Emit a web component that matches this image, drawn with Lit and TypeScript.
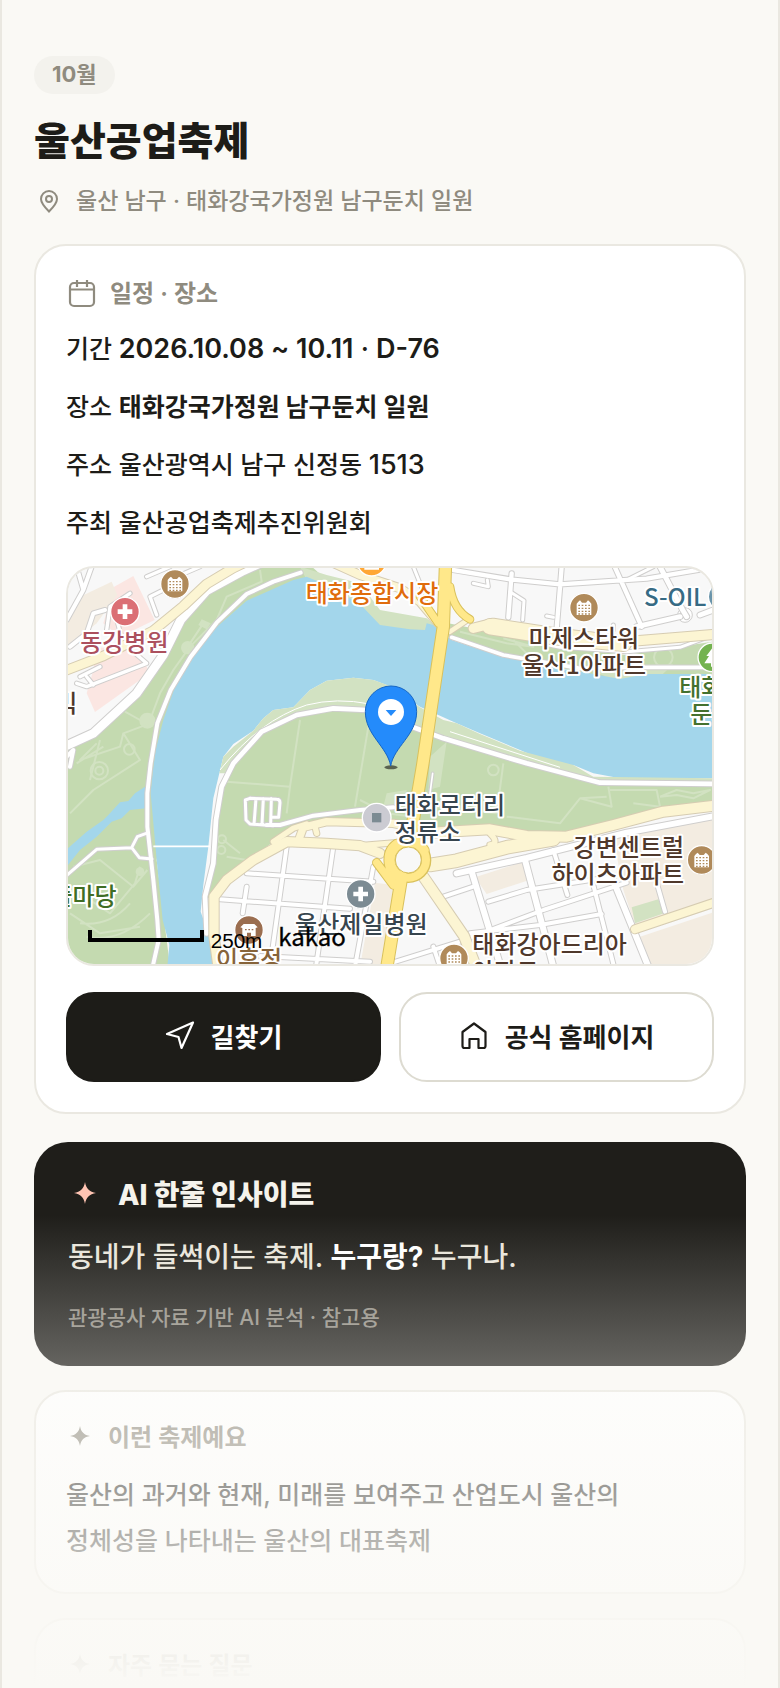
import { LitElement, html, css, svg } from "lit";
import { customElement } from "lit/decorators.js";

type Road = [width: number, d: string];

interface Label {
  x: number;
  y: number;
  lines: string[];
  color: string;
  anchor?: "start" | "middle" | "end";
}

const STREETS: Road[] = [
  [26, "M0 566L100 520L230 400L310 285L362 180L440 92L550 32L600 10"],
  [12, "M722 38L640 65L560 102L470 188L392 290L332 390L292 490L272 610L262 700L262 800L280 960L292 1080L296 1140L278 1220"],
  [14, "M440 1120L435 1010L460 910L468 780L485 680L520 610L605 515L710 465L820 445L920 450L1050 498L1150 535L1400 610L1620 668L1980 672"],
  [9, "M10 955L110 868L215 863L232 830L265 818M215 863L238 893L276 897"],
  [12, "M620 795L660 795L760 767L900 750L1000 742"],
  [9, "M570 715L650 718Q660 718 660 728L656 772L634 772M570 715L556 720L558 780L570 792L640 797M588 716L582 793M610 716L606 793M634 716L632 793"],
  [18, "M1190 940L1400 894L1700 818L1980 765"],
  [5, "M1118 640L1106 730"],
  [12, "M50 20L70 90L20 180M70 90L95 20M30 260L80 220L100 160L135 150"],
  [10, "M50 370L80 380L260 310L225 280M80 350L100 375M120 320L60 350M210 100L150 140L140 210M165 160L190 250"],
  [10, "M290 165L270 110L370 60M260 50L330 20M350 50L420 20"],
  [12, "M30 20L20 40M20 590L40 570L30 620"],
  [13, "M1180 30L1350 58L1500 73L1760 56L1960 22M1505 20L1490 205M1355 40L1345 172M1664 20L1745 200"],
  [15, "M1800 20L1868 150L1880 170M1920 165L1960 150L1990 130M1730 200L1860 170"],
  [9, "M1350 95L1392 122L1388 180M1240 70L1285 80L1282 60M1460 168L1480 172M1060 20L1090 95M1700 60L1780 20M1660 195L1660 210"],
  [11, "M1175 232L1330 285L1560 325L1720 322L1980 322"],
  [9, "M1420 245L1500 262L1700 275L1860 262L1960 225"],
  [12, "M680 860L630 1220M820 860L768 1220M560 940L940 965M480 1018L870 1046M940 920L885 1220M560 980L548 1060M600 1188L930 1205"],
  [18, "M1235 935L1322 1220M1395 900L1480 1220"],
  [12, "M1600 975L1662 1220M1480 870L1522 1005M1782 940L1815 1055"],
  [18, "M1655 950L1765 1220"],
  [12, "M1285 1025L1400 990L1655 950M1150 1010L1240 980M990 1210L1200 1145L1450 1050L1700 968M1230 1120L1440 1095L1625 1062M1120 1160L1140 1220"],
];

const PALE: Road[] = [
  [26, "M0 338L130 288L280 212L370 138L440 72L520 24L570 0"],
  [24, "M800 0L900 45L1020 85L1080 125L1135 190"],
  [28, "M1240 205L1300 190L1480 218L1700 245L1980 222"],
  [46, "M1290 200L1480 230L1690 250"],
  [14, "M1170 215L1230 175"],
  [28, "M475 1225L462 1130L462 1010L500 960L580 900L680 845L800 850L900 857L960 880"],
  [22, "M718 835L730 802L800 785L1000 790L1110 815"],
  [16, "M640 845L700 805L740 792M770 820L765 800M900 857L1010 848"],
  [30, "M1110 818L1290 808L1400 828L1520 830L1660 795L1810 755L1980 735"],
  [38, "M1110 915L1190 902L1340 862L1480 838"],
  [16, "M1290 820Q1320 850 1290 855"],
  [30, "M1090 950L1212 1128L1250 1225"],
  [24, "M1725 1108L1980 1022"],
];

const MAJOR: Road[] = [
  [34, "M1157 0L1150 200L1120 400L1088 615L1060 780L1050 850"],
  [20, "M1170 80Q1180 150 1230 178M1080 110L1135 190"],
  [22, "M1010 850Q980 870 985 910Q990 950 1020 970M1095 870Q1080 850 1065 830M950 908L1000 975"],
  [34, "M1025 950L980 1225"],
];

const PATHS =
  "M600 30L605 65L500 110L470 180L390 260L340 330L300 400L270 480M430 190L390 250M240 480L195 455" +
  "M270 490L190 520L180 560L60 600L110 550M190 520L240 600L100 690L30 760M50 610L130 560" +
  "M120 540L90 660M720 480L690 680L500 665M925 500L905 620L885 740M690 680L680 760" +
  "M40 920L120 900L220 980L262 930M30 1060L120 1120L240 1100M60 1000L150 1060L225 970L240 920" +
  "M80 1130Q180 1150 270 1060M60 1090Q150 1100 210 1030M480 980L560 900L500 890M490 840L540 880" +
  "M1330 610L1310 760L1120 740M1645 680L1655 740L1560 715L1500 790L1340 770M1560 715L1640 710" +
  "M1650 690L1790 690L1800 740L1720 730M1800 710L1850 690L1900 700L1950 690L1900 715L1850 705L1800 710" +
  "M1060 770L980 760L900 720";

const LABELS: Label[] = [
  { x: 193, y: 274, lines: ["동강병원"], color: "#ac505e" },
  { x: 936, y: 126, lines: ["태화종합시장"], color: "#e06c0c" },
  { x: 1572, y: 261, lines: ["마제스타워", "울산1아파트"], color: "#4f382b" },
  { x: 1752, y: 138, lines: ["S-OIL"], color: "#376b84", anchor: "start" },
  { x: 1957, y: 407, lines: ["태화강", "둔치"], color: "#44712e" },
  { x: 52, y: 455, lines: ["빅"], color: "#4f382b", anchor: "end" },
  { x: 170, y: 1035, lines: ["뜰마당"], color: "#3f6d24", anchor: "end" },
  { x: 1004, y: 763, lines: ["태화로터리", "정류소"], color: "#37454e", anchor: "start" },
  { x: 1872, y: 888, lines: ["강변센트럴", "하이츠아파트"], color: "#4f382b", anchor: "end" },
  { x: 904, y: 1118, lines: ["울산제일병원"], color: "#37454e" },
  { x: 1237, y: 1180, lines: ["태화강아드리아", "아파트"], color: "#4f382b", anchor: "start" },
  { x: 567, y: 1225, lines: ["이휴정"], color: "#87643a" },
];

const roadLayer = (roads: Road[], fill: string, edge: string) => svg`
  <g fill="none" stroke-linecap="round" stroke-linejoin="round">
    <g stroke=${edge}>${roads.map(([w, d]) => svg`<path d=${d} stroke-width=${w + 6}></path>`)}</g>
    <g stroke=${fill}>${roads.map(([w, d]) => svg`<path d=${d} stroke-width=${w}></path>`)}</g>
  </g>`;

const disc = (x: number, y: number, fill: string, glyph: unknown) => svg`
  <g transform="translate(${x} ${y})">
    <circle r="43" fill=${fill} stroke="#fff" stroke-width="4"></circle>
    ${glyph}
  </g>`;

const apartment = svg`
  <path fill="#fff" d="M-22 22V-12L-17 -18L-12 -22L-6 -15H6L12 -22L17 -18L22 -12V22Z"></path>
  <path stroke="#b08a5a" stroke-width="4" stroke-dasharray="5 5" fill="none"
    d="M-17 -7H19M-17 2H19M-17 11H19M-17 19H19"></path>`;

const cross = svg`<path fill="#fff" d="M-7 -22H7V-7H22V7H7V22H-7V7H-22V-7H-7Z"></path>`;

@customElement("festival-map")
export class FestivalMap extends LitElement {
  static styles = css`
    :host {
      display: block;
      height: 396px;
      overflow: hidden;
      border: 2px solid #eae8e1;
      border-radius: 28px;
      background: #f8f8f8;
    }
    .canvas {
      display: block;
      width: 100%;
      height: 100%;
    }
    .label {
      font: 500 72px "Noto Sans CJK KR", sans-serif;
      stroke: #fff;
      stroke-width: 12px;
      stroke-linejoin: round;
      paint-order: stroke;
    }
    .scale {
      font: 400 62px "Liberation Sans", sans-serif;
    }
    .brand {
      font: 400 72px "Noto Sans CJK KR", sans-serif;
    }
  `;

  render() {
    return html`
      <svg class="canvas" viewBox="24 24 1932 1188" preserveAspectRatio="xMidYMid slice"
        role="img" aria-label="태화강국가정원 남구둔치 지도">
        <rect width="1990" height="1240" fill="#f8f8f8"></rect>
        <g fill="#fbe6e2">
          <path d="M160 82L220 48L284 180L180 230L130 190Z"></path>
          <path d="M110 262L240 270L268 340L105 456L80 400L100 330Z"></path>
        </g>
        <g fill="#f3ece1">
          <path d="M24 190L60 110L155 65L172 105L110 190L24 262Z"></path>
          <path d="M1245 952L1390 905L1408 960L1280 1002Z"></path>
          <path d="M1660 835L1980 775V1015L1725 1095L1690 990Z"></path>
          <path d="M1740 1130L1980 1050V1220H1775Z"></path>
          <path d="M945 968L1000 975L975 1220H900Z"></path>
        </g>
        <path fill="#d2e2c2" d="M1715 1042L1795 1018L1812 1060L1725 1090Z"></path>

        <path fill="#c4dab0"
          d="M590 24L760 24L800 60L720 100L500 300L340 600L290 900L330 1220H0V580L110 525L240 405L320 290L370 190L450 100Z"></path>
        <path fill="#d2e2c2"
          d="M720 20L800 45L900 70L960 150L1100 175L1130 200V240L960 215L880 130L740 60Z"></path>
        <path fill="#c4dab0"
          d="M1165 190L1290 215L1480 260L1700 285L1960 245V350H1620L1300 280L1165 230Z"></path>
        <path fill="#d2e2c2" d="M1560 318L1840 312L1800 350L1720 372L1640 350Z"></path>

        <path fill="#a3d6eb"
          d="M322 1220L328 1155L308 1080L290 900L272 700L278 640L287 570L310 480L345 380L392 300L460 210L560 122L700 60L740 50L800 75L900 132L960 195L1050 208L1095 210L1100 190L1120 195L1175 240L1260 268L1440 316L1600 342L1680 357L1760 342L1980 342V655H1680L1600 640L1540 615L1500 622L1380 570L1260 520L1190 490L1080 440L980 375L940 360L880 353L800 362L750 390L700 442L640 450L610 475L580 512L520 552L490 590L478 640L460 715L445 860L430 975L422 1055L438 1100L455 1160L462 1220Z"></path>
        <path fill="#a3d6eb"
          d="M255 680L225 700L205 723L180 727L145 765L130 780L80 815L24 865V915L60 870L110 830L155 785L185 775L210 750L258 745Z"></path>

        <path fill="#d2e2c2"
          d="M478 640L490 590L520 560L580 512L610 475L640 450L700 442L750 390L800 362L880 353L940 360L990 378L1080 442L1150 480L1190 490L1260 522L1380 572L1540 615L1600 650L1980 655V680H1600L1100 520L820 450L600 520L500 640Z"></path>
        <path fill="#c4dab0"
          d="M490 690L520 620L605 518L710 468L820 448L920 452L1050 505L1150 538L1400 612L1620 672H1980V735L1810 752L1660 792L1520 828L1400 820L1290 795L1110 805L900 775L740 785L660 830L500 950L440 1020L455 930L470 790Z"></path>
        <path fill="none" stroke="#fff" stroke-width="3"
          d="M480 630Q600 480 740 435Q830 412 930 432M1170 515L1500 622"></path>
        <g fill="#d2e2c2">
          <circle cx="383" cy="263" r="20"></circle>
          <circle cx="262" cy="482" r="24"></circle>
          <circle cx="240" cy="935" r="13"></circle>
          <path d="M425 178L452 190L440 208L415 195ZM1110 590L1160 545L1140 680L1105 690ZM980 700L1040 690L1035 730L970 740Z"></path>
        </g>
        <g fill="none" stroke="#d2e2c2" stroke-width="6" stroke-linejoin="round">
          <path d=${PATHS}></path>
          <circle cx="118" cy="632" r="26"></circle>
          <circle cx="118" cy="632" r="12"></circle>
          <circle cx="208" cy="568" r="16"></circle>
          <circle cx="486" cy="838" r="12"></circle>
          <circle cx="484" cy="870" r="12"></circle>
          <circle cx="1810" cy="292" r="28"></circle>
          <circle cx="1300" cy="630" r="16"></circle>
          <path d="M1200 215L1340 250L1420 260L1330 235M1360 240L1400 280"></path>
        </g>
        <path fill="none" stroke="#fff" stroke-width="5" d="M280 859H450"></path>

        <circle cx="1875" cy="165" r="22" fill="#fff" stroke="#cfcecd" stroke-width="3"></circle>
        ${roadLayer(STREETS, "#ffffff", "#cfcecd")}
        ${roadLayer(PALE, "#fcf5d3", "#d6ccb2")}
        <circle cx="1045" cy="900" r="52" fill="#fff" stroke="#d9c15c" stroke-width="34"></circle>
        ${roadLayer(MAJOR, "#ffe88a", "#d9c15c")}
        <circle cx="1045" cy="900" r="53" fill="none" stroke="#ffe88a" stroke-width="24"></circle>
        <circle cx="1045" cy="900" r="39" fill="#f8f8f8" stroke="#d9c15c" stroke-width="3"></circle>

        ${disc(345, 72, "#b08a5a", apartment)}
        ${disc(195, 155, "#db6f75", cross)}
        ${disc(935, 5, "#ffa735", svg`<path fill="#fff" d="M-22 10H22V24H-22Z"></path>`)}
        ${disc(1572, 143, "#b08a5a", apartment)}
        ${disc(1988, 110, "#6a94aa", "")}
        ${disc(1957, 292, "#74b350", svg`<path fill="#fff" d="M0 -28L18 -4H10L24 18H4V28H-4V18H-24L-10 -4H-18Z"></path>`)}
        ${disc(950, 773, "#cbcbd2", svg`<rect x="-14" y="-14" width="28" height="28" fill="#7c8b93"></rect>`)}
        ${disc(1925, 900, "#b08a5a", apartment)}
        ${disc(902, 1002, "#7c8b93", cross)}
        ${disc(567, 1110, "#9b6e50", svg`<path fill="#fff" d="M-26 -8L-16 -18H16L26 -8L20 -6V18H6V8H-6V18H-20V-6Z"></path>
          <path stroke="#9b6e50" stroke-width="4" stroke-dasharray="5 5" d="M-12 -1H14"></path>`)}
        ${disc(1182, 1195, "#b08a5a", apartment)}

        ${LABELS.map(
          (l) => svg`<text class="label" fill=${l.color} text-anchor=${l.anchor ?? "middle"}>${l.lines.map(
            (line, i) => svg`<tspan x=${l.x} y=${l.y + i * 81}>${line}</tspan>`
          )}</text>`
        )}

        <path fill="none" stroke="#000" stroke-width="12" d="M90 1110V1140H426V1110"></path>
        <text class="scale" x="452" y="1163">250m</text>
        <text class="brand" x="655" y="1157" stroke="#000" stroke-width="1">kakao</text>

        <ellipse cx="993" cy="622" rx="20" ry="6" fill="#000" opacity=".55"></ellipse>
        <path fill="#248bfb" stroke="#1666c4" stroke-width="3"
          d="M992 618C982 560 916 525 916 455A77 77 0 0 1 1070 455C1070 525 1002 560 992 618Z"></path>
        <circle cx="993" cy="456" r="39" fill="#fff"></circle>
        <path fill="#248bfb" d="M977 450H1009L993 468Z"></path>
      </svg>
    `;
  }
}

const sparkle = html`<svg class="spark" viewBox="0 0 24 24" aria-hidden="true">
  <path fill="currentColor" d="M12 0C13 7 17 11 24 12C17 13 13 17 12 24C11 17 7 13 0 12C7 11 11 7 12 0Z"></path>
</svg>`;

@customElement("app-root")
export class AppRoot extends LitElement {
  static styles = css`
    :host {
      display: block;
      font-family: "Inter", "Noto Sans CJK KR", sans-serif;
      font-weight: 500;
      color: #1d1c18;
    }
    .page {
      position: relative;
      box-sizing: border-box;
      height: 100vh;
      overflow: hidden;
      padding: 56px 32px 0;
      border: 0 solid #eae8e1;
      border-width: 0 2px;
      background: #faf9f5;
    }
    .fade {
      position: absolute;
      inset: auto 0 0;
      height: 28vh;
      background: linear-gradient(rgba(250, 249, 245, 0), #faf9f5);
      pointer-events: none;
    }
    .badge {
      display: inline-block;
      padding: 0 18px 2px;
      border-radius: 19px;
      background: #f3f2ed;
      color: #8f8b7f;
      font-size: 22px;
      line-height: 36px;
      font-weight: 700;
      vertical-align: top;
    }
    .title {
      margin: 20px 0 0;
      font-size: 39px;
      line-height: 54px;
      font-weight: 800;
    }
    .place {
      display: flex;
      align-items: center;
      gap: 16px;
      margin: 14px 0 0;
      padding-left: 4px;
      color: #8f8b7f;
      font-size: 23px;
      line-height: 38px;
    }
    .pin {
      width: 22px;
      height: 24px;
    }
    .card {
      box-sizing: border-box;
      margin-top: 24px;
      padding: 28px 30px;
      border: 2px solid #eae8e1;
      border-radius: 32px;
      background: #fff;
    }
    .schedule {
      padding: 30px;
    }
    .heading {
      display: flex;
      align-items: center;
      gap: 14px;
      margin: 0;
      color: #8f8b7f;
      font-size: 24px;
      line-height: 36px;
      font-weight: 600;
    }
    .calendar {
      width: 30px;
      height: 30px;
    }
    .spark {
      width: 20px;
      height: 20px;
      margin: 0 4px 4px;
    }
    .facts {
      margin: 14px 0 20px;
      font-size: 25px;
      line-height: 46px;
    }
    .fact {
      margin: 0 0 12px;
    }
    .strong {
      font-weight: 700;
    }
    .num {
      font-size: 27px;
      line-height: 1;
    }
    .num .strong {
      font-weight: 600;
    }
    .actions {
      display: grid;
      grid-template-columns: 1fr 1fr;
      gap: 18px;
      margin-top: 26px;
    }
    .action {
      display: flex;
      align-items: center;
      justify-content: center;
      gap: 16px;
      box-sizing: border-box;
      height: 90px;
      padding-bottom: 4px;
      border: 2px solid #dddbd1;
      border-radius: 28px;
      color: #1d1c18;
      font-size: 26px;
      font-weight: 700;
      text-decoration: none;
    }
    .primary {
      border-color: #1d1c18;
      background: #1d1c18;
      color: #fff;
    }
    .glyph {
      width: 30px;
      height: 30px;
    }
    .insight {
      margin-top: 28px;
      padding: 32px 34px 32px;
      border-radius: 34px;
      background: #1f1e1a;
    }
    .insight-title {
      display: flex;
      align-items: center;
      gap: 18px;
      margin: 0;
      color: #f5f3ec;
      font-size: 28px;
      line-height: 42px;
      font-weight: 800;
    }
    .insight-title .spark {
      width: 22px;
      height: 22px;
      margin: 0 4px 4px 6px;
      color: #ffc4b3;
    }
    .insight-text {
      margin: 18px 0 0;
      color: #e9e5da;
      font-size: 28px;
      line-height: 46px;
    }
    .insight-text .strong {
      color: #fff;
    }
    .note {
      margin: 22px 0 0;
      color: #908c82;
      font-size: 21px;
      line-height: 32px;
    }
    .copy {
      margin: 16px 0 0;
      font-size: 25px;
      line-height: 46px;
      word-break: keep-all;
    }
  `;

  render() {
    return html`
      <main class="page">
        <span class="badge">10월</span>
        <h1 class="title">울산공업축제</h1>
        <p class="place">
          <svg class="pin" viewBox="0 0 22 24" fill="none" stroke="currentColor" stroke-width="2" aria-hidden="true">
            <path d="M11 22.500C6 17.500 3 14 3 10A8 8 0 0 1 19 10C19 14 16 17.500 11 22.500Z"></path>
            <circle cx="11" cy="10" r="3"></circle>
          </svg>
          <span>울산 남구 · 태화강국가정원 남구둔치 일원</span>
        </p>

        <section class="card schedule">
          <h2 class="heading">
            <svg class="calendar" viewBox="0 0 30 30" fill="none" stroke="currentColor" stroke-width="2.200" aria-hidden="true">
              <rect x="4" y="4" width="24" height="23" rx="4"></rect>
              <path d="M4 10.500H28M11 1V8M21 1V8"></path>
            </svg>
            일정 · 장소
          </h2>
          <div class="facts">
            <p class="fact">기간 <span class="num"><b class="strong">2026.10.08 ~ 10.11</b> · <b class="strong">D-76</b></span></p>
            <p class="fact">장소 <b class="strong">태화강국가정원 남구둔치 일원</b></p>
            <p class="fact">주소 울산광역시 남구 신정동 <span class="num">1513</span></p>
            <p class="fact">주최 울산공업축제추진위원회</p>
          </div>
          <festival-map></festival-map>
          <div class="actions">
            <a class="action primary" href="#directions">
              <svg class="glyph" viewBox="0 0 30 30" fill="none" stroke="currentColor" stroke-width="2.200" stroke-linejoin="round" aria-hidden="true">
                <path d="M28 2.500L2 14L13.500 17L16.500 28Z"></path>
              </svg>
              길찾기
            </a>
            <a class="action" href="#homepage">
              <svg class="glyph" viewBox="0 0 30 30" fill="none" stroke="currentColor" stroke-width="2.200" stroke-linejoin="round" aria-hidden="true">
                <path d="M15 3.500L3.500 12V26Q3.500 28 5.500 28H10.500V19H19.500V28H24.500Q26.500 28 26.500 26V12Z"></path>
              </svg>
              공식 홈페이지
            </a>
          </div>
        </section>

        <section class="insight">
          <h2 class="insight-title">${sparkle} AI 한줄 인사이트</h2>
          <p class="insight-text">동네가 들썩이는 축제. <b class="strong">누구랑?</b> 누구나.</p>
          <p class="note">관광공사 자료 기반 AI 분석 · 참고용</p>
        </section>

        <section class="card">
          <h2 class="heading">${sparkle} 이런 축제예요</h2>
          <p class="copy">울산의 과거와 현재, 미래를 보여주고 산업도시 울산의 정체성을 나타내는 울산의 대표축제</p>
        </section>

        <section class="card">
          <h2 class="heading">${sparkle} 자주 묻는 질문</h2>
        </section>

        <div class="fade"></div>
      </main>
    `;
  }
}
